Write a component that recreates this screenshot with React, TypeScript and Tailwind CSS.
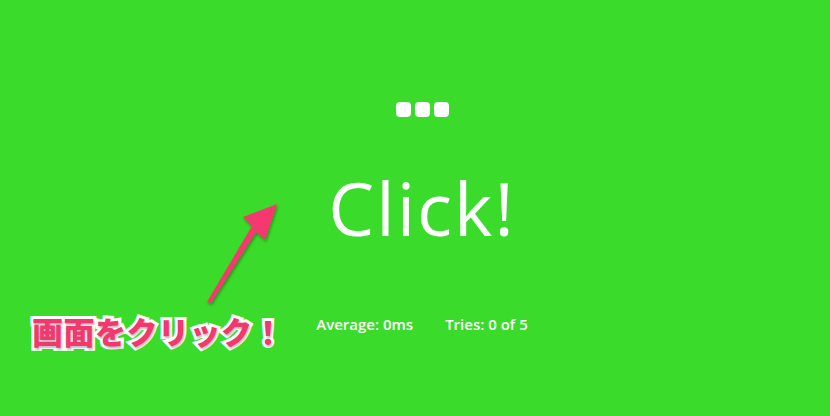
export default function App() {
  return (
    <div
      className="relative w-full h-[416px] bg-[#3adb2a] overflow-hidden text-white"
      style={{ fontFamily: "'Open Sans', sans-serif" }}
    >
      <div className="flex flex-col items-center pt-[102px] pl-[14px]">
        {/* Status dots */}
        <div className="flex gap-[4px]">
          <div className="w-[15px] h-[15px] rounded-[4px] bg-white" />
          <div className="w-[15px] h-[15px] rounded-[4px] bg-white" />
          <div className="w-[15px] h-[15px] rounded-[4px] bg-white" />
        </div>

        {/* Title */}
        <h1 className="mt-[41px] text-[73px] leading-[100px] font-normal tracking-[2px]">
          Click!
        </h1>

        {/* Stats */}
        <div className="mt-[56px] flex gap-[32px] text-[15px] font-semibold leading-[20px]">
          <span>Average: 0ms</span>
          <span>Tries: 0 of 5</span>
        </div>
      </div>

      {/* Annotation arrow */}
      <svg
        className="absolute left-[195px] top-[195px]"
        width="100"
        height="120"
        viewBox="0 0 100 120"
      >
        <defs>
          <filter id="sh" x="-20%" y="-20%" width="140%" height="140%">
            <feDropShadow dx="1" dy="2" stdDeviation="1.5" floodColor="#000" floodOpacity="0.35" />
          </filter>
        </defs>
        <polygon
          points="12,107 16,108 61,37 70,45 82,9 48,22 57,31"
          fill="#f5386f"
          filter="url(#sh)"
        />
      </svg>

      {/* Annotation text */}
      <div
        className="absolute left-[32px] top-[310px] text-[31px] font-black leading-[42px] text-[#f2386f] tracking-[0.5px]"
        style={{
          fontFamily: "'Noto Sans CJK JP', sans-serif",
          WebkitTextStroke: "6px white",
          paintOrder: "stroke fill",
          textShadow: "1px 2px 2px rgba(0,0,0,0.25)",
        }}
      >
        画面をクリック！
      </div>
    </div>
  );
}
